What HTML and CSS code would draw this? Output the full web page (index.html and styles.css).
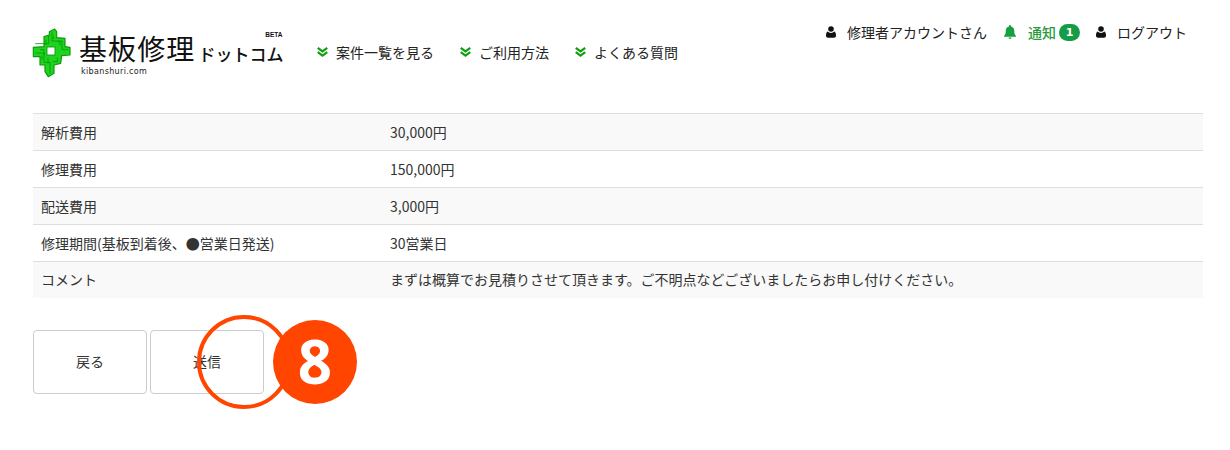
FILE: index.html
```html
<!DOCTYPE html>
<html lang="ja">
<head>
<meta charset="utf-8">
<title>基板修理ドットコム</title>
<link rel="stylesheet" href="styles.css">
</head>
<body>
<svg class="sprites" width="0" height="0">
  <symbol id="i-user" viewBox="0 0 10 12"><circle cx="5" cy="3" r="2.8"/><path d="M1.6 5.6C2.4 6.5 3.6 7 5 7s2.6-.5 3.4-1.4C9.4 6.2 10 7.6 10 9.6c0 1.4-.9 2.2-2 2.2H2c-1.100 0-2-.8-2-2.200 0-2 .6-3.400 1.600-4z"/></symbol>
  <symbol id="i-chev" viewBox="0 0 12 11"><path d="M1.600 0 6 3.300 10.400 0 12 1.900 6 6.300 0 1.900zM1.600 4.700 6 8 10.400 4.700 12 6.600 6 11 0 6.600z"/></symbol>
</svg>
<header class="site-header">
  <a class="logo">
    <svg class="logo-mark" viewBox="36 36 120 153" width="40" height="51">
      <path class="m-out" d="M88 50 104 42 110 50 110 68 135 70 135 95 150 97 150 120 125 122 122 145 102 150 102 175 85 185 75 170 75 150 60 150 60 125 40 125 40 97 72 95 72 65 88 60z"/>
      <path class="m-line" d="M96 52V78H126V104H144M86 62V86H46M78 74V90M46 114H72V142H90V176M100 64V72M112 80H120V92M60 104H72V120M112 128V140H98M66 122V134M84 128V146"/>
      <rect class="m-hole" x="81" y="96" width="24" height="24"/>
    </svg>
    <span class="logo-words">
      <span class="logo-name"><span class="logo-big">基板修理</span><span class="logo-small">ドットコム</span><span class="logo-beta">BETA</span></span>
      <span class="logo-url">kibanshuri.com</span>
    </span>
  </a>
  <nav class="main-nav">
    <a class="main-link"><svg class="chev"><use href="#i-chev"/></svg>案件一覧を見る</a>
    <a class="main-link"><svg class="chev"><use href="#i-chev"/></svg>ご利用方法</a>
    <a class="main-link"><svg class="chev"><use href="#i-chev"/></svg>よくある質問</a>
  </nav>
  <nav class="user-nav">
    <a class="user-link"><svg class="user-ico"><use href="#i-user"/></svg>修理者アカウントさん</a>
    <a class="user-link notice">
      <svg class="bell" viewBox="0 0 12 14"><path d="M6 0a1 1 0 0 1 1 1v.6c2 .4 3.200 2 3.200 4 0 3 .6 4.300 1.800 5.400v.8H0V11c1.200-1.100 1.800-2.400 1.800-5.400 0-2 1.200-3.600 3.200-4V1a1 1 0 0 1 1-1zM4.400 12.600h3.200a1.600 1.400 0 0 1-3.200 0z"/></svg>
      通知<span class="count">1</span>
    </a>
    <a class="user-link"><svg class="user-ico"><use href="#i-user"/></svg>ログアウト</a>
  </nav>
</header>
<main class="content">
  <table class="detail">
    <colgroup><col class="col-label"><col></colgroup>
    <tr><th>解析費用</th><td>30,000円</td></tr>
    <tr><th>修理費用</th><td>150,000円</td></tr>
    <tr><th>配送費用</th><td>3,000円</td></tr>
    <tr><th>修理期間(基板到着後、●営業日発送)</th><td>30営業日</td></tr>
    <tr class="last"><th>コメント</th><td>まずは概算でお見積りさせて頂きます。ご不明点などございましたらお申し付けください。</td></tr>
  </table>
  <div class="actions">
    <button class="btn">戻る</button>
    <button class="btn">送信</button>
    <span class="ring"></span>
    <span class="step">8</span>
  </div>
</main>
</body>
</html>
```

FILE: styles.css
```css
* { box-sizing: border-box; }
html, body { margin: 0; }
body {
  width: 1230px;
  height: 450px;
  overflow: hidden;
  background: #fff;
  color: #333;
  font-family: "Noto Sans CJK JP", "Noto Sans", sans-serif;
  font-size: 14px;
}
.sprites { position: absolute; }

.site-header {
  display: flex;
  align-items: flex-start;
  height: 113px;
  padding: 0 43px 0 33px;
}
.logo {
  display: flex;
  width: 284px;
  padding-top: 27px;
  color: #111;
}
.logo-mark { flex: none; margin-left: -1px; }
.m-out { fill: #1fd41f; stroke: #0b9a0b; stroke-width: 3.500; stroke-linejoin: round; }
.m-line { fill: none; stroke: #0a960a; stroke-width: 2.500; }
.m-hole { fill: #fff; stroke: #0a8f0a; stroke-width: 2.500; }
.logo-words { display: flex; flex-direction: column; margin-left: 7px; }
.logo-name { position: relative; display: flex; align-items: flex-end; height: 38px; white-space: nowrap; }
.logo-big { position: relative; top: 2px; font-size: 28px; line-height: 38px; letter-spacing: 1.100px; font-weight: 400; }
.logo-small { position: relative; top: 1px; font-size: 17px; line-height: 24px; margin-left: 3px; font-weight: 500; }
.logo-beta { position: absolute; right: 1px; top: 4px; font: 700 6.500px/8px "Liberation Sans", sans-serif; }
.logo-url { margin: 1px 0 0 2px; font: 8px/11px "DejaVu Sans", sans-serif; letter-spacing: .35px; color: #222; }

.main-nav { display: flex; gap: 26px; padding-top: 42px; }
.main-link { display: flex; align-items: center; gap: 8px; font-size: 14px; line-height: 20px; color: #222; white-space: nowrap; }
.chev { width: 11px; height: 10px; fill: #12a012; flex: none; }

.user-nav { display: flex; margin-left: auto; padding-top: 22px; gap: 16px; }
.user-link { display: flex; align-items: center; font-size: 14px; line-height: 20px; color: #222; white-space: nowrap; }
.user-ico { width: 10px; height: 12px; margin-right: 11px; fill: #111; flex: none; }
.notice { color: #2a9a3c; font-weight: 500; }
.bell { width: 12px; height: 14px; margin: 0 12px 0 1px; fill: #14a03c; flex: none; }
.count {
  display: inline-block;
  width: 21px;
  height: 17px;
  margin-left: 3px;
  border-radius: 9px;
  background: #169c46;
  color: #fff;
  font: 700 11px/17px "DejaVu Sans", sans-serif;
  text-align: center;
}

.content { padding: 0 27px 0 33px; }
.detail { width: 1170px; border-collapse: collapse; table-layout: fixed; }
.col-label { width: 348px; }
.detail tr:nth-child(odd) { background: #f9f9f9; }
.detail th, .detail td {
  height: 37px;
  padding: 0 8px 1px;
  border-top: 1px solid #dedede;
  font-size: 14px;
  font-weight: 400;
  line-height: 20px;
  text-align: left;
  color: #333;
}
.detail td { padding-left: 9px; }
.detail .last th, .detail .last td { height: 36px; }

.actions { position: relative; display: flex; gap: 3px; margin-top: 32px; }
.btn {
  width: 114px;
  height: 64px;
  padding: 0 0 2px;
  border: 1px solid #ccc;
  border-radius: 4px;
  background: #fff;
  color: #333;
  font: 14px/20px "Noto Sans CJK JP", sans-serif;
}
.ring {
  position: absolute;
  left: 164px;
  top: -15px;
  width: 94px;
  height: 94px;
  border: 4.500px solid #ff4500;
  border-radius: 50%;
}
.step {
  position: absolute;
  left: 240px;
  top: -10px;
  width: 84px;
  height: 84px;
  border-radius: 50%;
  background: #ff4500;
  color: #fff;
  font: 700 60px/82px "Open Sans", sans-serif;
  text-align: center;
}
```
